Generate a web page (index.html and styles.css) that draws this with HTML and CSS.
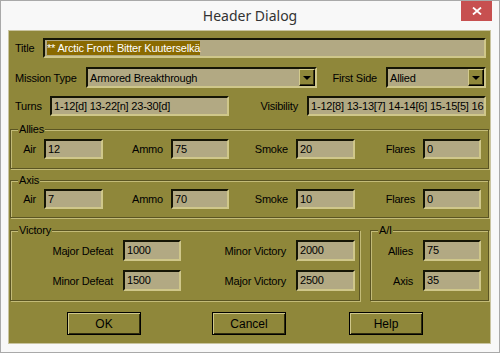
FILE: index.html
```html
<!DOCTYPE html>
<html lang="en">
<head>
    <meta charset="UTF-8">
    <meta name="viewport" content="width=device-width, initial-scale=1.0">
    <title>Header Dialog</title>
    <link rel="stylesheet" href="styles.css">
</head>
<body>
    <div class="window">
        <div class="titlebar">
            <span class="caption">Header Dialog</span>
            <button class="close" aria-label="Close">
                <svg width="10" height="8" viewBox="0 0 10 8">
                    <path d="M1 0.5 L9 7.5 M9 0.5 L1 7.5" stroke="#fff" stroke-width="1.8" fill="none"/>
                </svg>
            </button>
        </div>

        <div class="client">
            <!-- Title -->
            <div class="row row-title">
                <label class="lbl lbl-title">Title</label>
                <div class="field field-title"><span class="selected">** Arctic Front: Bitter Kuuterselkä</span></div>
            </div>

            <!-- Mission type / first side -->
            <div class="row row-mission">
                <label class="lbl lbl-mission">Mission Type</label>
                <div class="combo combo-mission">
                    <span class="combo-text">Armored Breakthrough</span>
                    <span class="combo-btn"></span>
                </div>
                <label class="lbl lbl-right">First Side</label>
                <div class="combo combo-side">
                    <span class="combo-text">Allied</span>
                    <span class="combo-btn"></span>
                </div>
            </div>

            <!-- Turns / visibility -->
            <div class="row row-turns">
                <label class="lbl lbl-turns">Turns</label>
                <div class="field field-turns">1-12[d] 13-22[n] 23-30[d]</div>
                <label class="lbl lbl-right">Visibility</label>
                <div class="field field-vis">1-12[8] 13-13[7] 14-14[6] 15-15[5] 16</div>
            </div>

            <!-- Allies -->
            <div class="group group-side">
                <span class="legend">Allies</span>
                <div class="side-grid">
                    <label class="lbl gl">Air</label>
                    <div class="field">12</div>
                    <label class="lbl gl">Ammo</label>
                    <div class="field">75</div>
                    <label class="lbl gl">Smoke</label>
                    <div class="field">20</div>
                    <label class="lbl gl">Flares</label>
                    <div class="field">0</div>
                </div>
            </div>

            <!-- Axis -->
            <div class="group group-side group-axis">
                <span class="legend">Axis</span>
                <div class="side-grid">
                    <label class="lbl gl">Air</label>
                    <div class="field">7</div>
                    <label class="lbl gl">Ammo</label>
                    <div class="field">70</div>
                    <label class="lbl gl">Smoke</label>
                    <div class="field">10</div>
                    <label class="lbl gl">Flares</label>
                    <div class="field">0</div>
                </div>
            </div>

            <div class="bottom-groups">
                <div class="group group-victory">
                    <span class="legend">Victory</span>
                    <div class="victory-grid">
                        <label class="lbl gl">Major Defeat</label>
                        <div class="field">1000</div>
                        <label class="lbl gl">Minor Victory</label>
                        <div class="field">2000</div>
                        <label class="lbl gl">Minor Defeat</label>
                        <div class="field">1500</div>
                        <label class="lbl gl">Major Victory</label>
                        <div class="field">2500</div>
                    </div>
                </div>

                <div class="group group-ai">
                    <span class="legend">A/I</span>
                    <div class="ai-grid">
                        <label class="lbl gl">Allies</label>
                        <div class="field">75</div>
                        <label class="lbl gl">Axis</label>
                        <div class="field">35</div>
                    </div>
                </div>
            </div>

            <div class="buttons">
                <button class="btn btn-ok">OK</button>
                <button class="btn btn-cancel">Cancel</button>
                <button class="btn btn-help">Help</button>
            </div>
        </div>
    </div>
</body>
</html>
```

FILE: styles.css
```css
* {
    margin: 0;
    padding: 0;
    box-sizing: border-box;
}

body {
    font-family: 'Liberation Sans', Arial, sans-serif;
    background-color: #ffffff;
}

.window {
    width: 500px;
    height: 353px;
    border: 1px solid #a9a9a9;
    background-color: #f8f8f8;
    display: flex;
    flex-direction: column;
}

/* Title bar */
.titlebar {
    height: 29px;
    display: grid;
    grid-template-columns: 1fr auto 1fr;
}

.caption {
    grid-column: 2;
    font-family: 'Noto Sans', 'Open Sans', sans-serif;
    font-size: 14px;
    color: #333333;
    line-height: 30px;
}

.close {
    grid-column: 3;
    justify-self: end;
    align-self: start;
    width: 31px;
    height: 20px;
    margin-right: 7px;
    border: none;
    background-color: #c75050;
    display: flex;
    align-items: center;
    justify-content: center;
}

/* Client area */
.client {
    flex: 1;
    margin: 0 8px 8px 7px;
    border: 1px solid #c9c4a0;
    background-color: #8f873a;
    font-size: 11px;
    letter-spacing: -0.2px;
    color: #000000;
}

.row {
    display: flex;
    align-items: center;
    padding: 0 4px 0 6px;
}

.lbl {
    white-space: nowrap;
}

.lbl-right {
    flex: 1;
    text-align: right;
    padding-right: 9px;
}

.row-title {
    margin-top: 7px;
}

.lbl-title {
    width: 28px;
}

.field-title {
    flex: 1;
    height: 22px;
}

.selected {
    background-color: #8a6a00;
    color: #ffffff;
    padding: 1px 0;
}

.row-mission {
    margin-top: 9px;
}

.lbl-mission {
    width: 71px;
}

.row-turns {
    margin-top: 8px;
}

.lbl-turns {
    width: 35px;
}

.field-turns {
    width: 179px;
}

.field-vis {
    width: 179px;
}

/* Sunken edit field */
.field {
    height: 20px;
    padding-left: 2px;
    background-color: #b2a983;
    border: 2px solid;
    border-color: #151505 #cfc78a #cfc78a #151505;
    line-height: 16px;
    white-space: nowrap;
    overflow: hidden;
}

/* Combo box */
.combo {
    height: 21px;
    display: flex;
    align-items: center;
    background-color: #b2a983;
    border: 2px solid;
    border-color: #151505 #cfc78a #cfc78a #151505;
}

.combo-mission {
    width: 231px;
}

.combo-side {
    width: 100px;
}

.combo-text {
    flex: 1;
    padding-left: 2px;
}

.combo-btn {
    width: 16px;
    height: 17px;
    background-color: #8f873a;
    border: 1px solid;
    border-color: #d2ca8c #000000 #000000 #d2ca8c;
    box-shadow: inset -1px -1px 0 #3a3612;
    display: flex;
    align-items: center;
    justify-content: center;
}

.combo-btn::after {
    content: '';
    border-left: 4px solid transparent;
    border-right: 4px solid transparent;
    border-top: 4px solid #000000;
    margin-top: 1px;
}

/* Group boxes */
.group {
    position: relative;
    border: 1px solid #5b5523;
    box-shadow: inset 1px 1px 0 #c3bb78, 1px 1px 0 #c3bb78;
}

.legend {
    position: absolute;
    top: -7px;
    left: 7px;
    padding: 0 1px;
    line-height: 13px;
    background-color: #8f873a;
}

.group-side {
    margin: 13px 1px 0 1px;
    padding: 9px 0 9px 0;
}

.group-axis {
    margin-top: 11px;
    padding: 8px 0 8px 0;
}

.side-grid {
    display: grid;
    grid-template-columns: 33px 59px 68px 58px 67px 59px 68px 58px;
    align-items: center;
}

.gl {
    text-align: right;
    padding-right: 8px;
}

.bottom-groups {
    display: flex;
    gap: 10px;
    margin: 12px 1px 0 1px;
}

.group-victory {
    width: 350px;
    padding: 9px 0 9px 0;
}

.victory-grid {
    display: grid;
    grid-template-columns: 112px 58px 115px 59px;
    row-gap: 9px;
    align-items: center;
}

.victory-grid .field,
.ai-grid .field {
    height: 21px;
}

.victory-grid .gl,
.ai-grid .gl {
    padding-right: 10px;
}

.group-ai {
    flex: 1;
    padding: 9px 0 9px 0;
}

.ai-grid {
    display: grid;
    grid-template-columns: 52px 58px;
    row-gap: 9px;
    align-items: center;
}

/* Buttons */
.buttons {
    display: flex;
    margin-top: 11px;
    padding-left: 58px;
}

.btn {
    width: 74px;
    height: 23px;
    font-family: inherit;
    font-size: 12px;
    letter-spacing: 0;
    background-color: #8f873a;
    border: 1px solid #000000;
    box-shadow: inset 1px 1px 0 #cfc78a, inset -1px -1px 0 #2e2b0d;
    color: #000000;
}

.btn-cancel {
    margin-left: 71px;
}

.btn-help {
    margin-left: 63px;
}
```
